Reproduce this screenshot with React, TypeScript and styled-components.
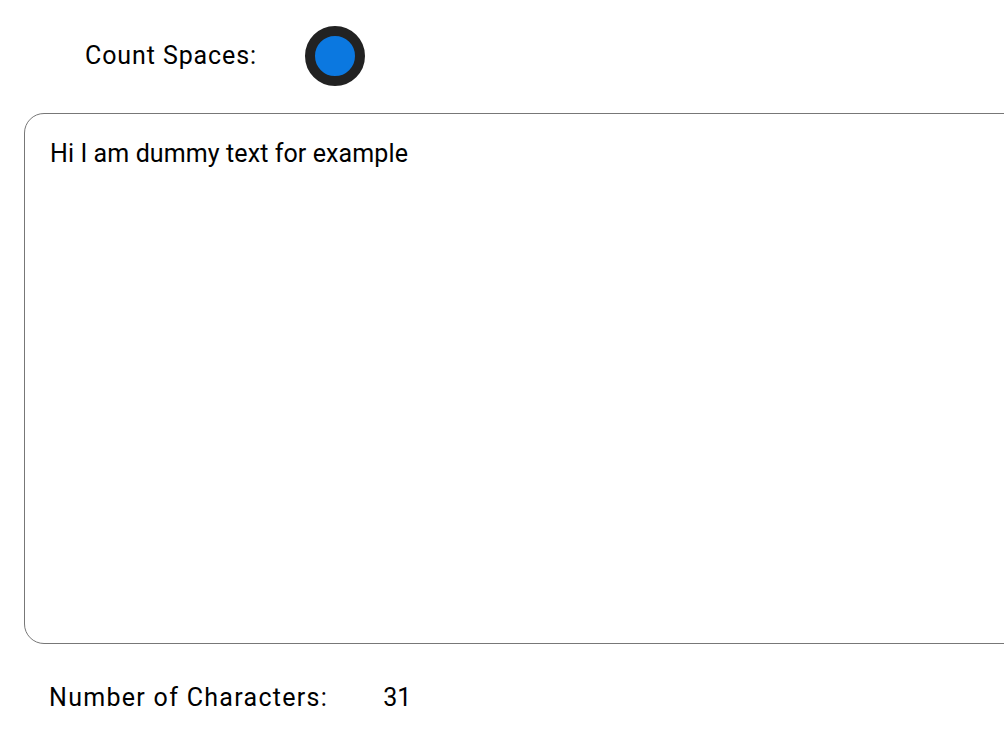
import React, { useState } from "react";
import styled, { createGlobalStyle } from "styled-components";

const Global = createGlobalStyle`
  html, body { margin: 0; padding: 0; background: #fff; overflow: hidden; }
  body { font-family: Roboto, "Noto Sans", sans-serif; color: #000; }
`;

const Page = styled.div`
  display: flex;
  flex-direction: column;
  padding: 26px 0 0 24px;
  width: 1100px;
`;

const Header = styled.div`
  display: flex;
  align-items: center;
  gap: 48px;
  padding-left: 61px;
  height: 60px;
`;

const Label = styled.span<{ $spacing?: number }>`
  font-size: 25px;
  line-height: 30px;
  letter-spacing: ${(p) => p.$spacing ?? 0}px;
`;

const Toggle = styled.button<{ $on: boolean }>`
  width: 60px;
  height: 60px;
  border-radius: 50%;
  border: 10px solid #222222;
  background: ${(p) => (p.$on ? "#0b78e0" : "#ffffff")};
  padding: 0;
  cursor: pointer;
  box-sizing: border-box;
`;

const TextArea = styled.textarea`
  margin-top: 27px;
  width: 1000px;
  height: 531px;
  box-sizing: border-box;
  border: 1px solid #777777;
  border-radius: 20px;
  padding: 25px 25px;
  font-family: Roboto, "Noto Sans", sans-serif;
  font-size: 25px;
  line-height: 30px;
  letter-spacing: 0.1px;
  color: #000;
  resize: none;
  outline: none;
`;

const Footer = styled.div`
  display: flex;
  align-items: center;
  gap: 55px;
  padding-left: 25px;
  margin-top: 39px;
`;

export default function App() {
  const [on, setOn] = useState(true);
  const [text, setText] = useState("Hi I am dummy text for example");
  const count = on ? text.length : text.replace(/\s/g, "").length;
  return (
    <>
      <Global />
      <Page>
        <Header>
          <Label $spacing={0.9}>Count Spaces:</Label>
          <Toggle $on={on} onClick={() => setOn(!on)} aria-label="Count spaces" />
        </Header>
        <TextArea value={text} onChange={(e) => setText(e.target.value)} />
        <Footer>
          <Label $spacing={1.3}>Number of Characters:</Label>
          <Label>{count + 1}</Label>
        </Footer>
      </Page>
    </>
  );
}
